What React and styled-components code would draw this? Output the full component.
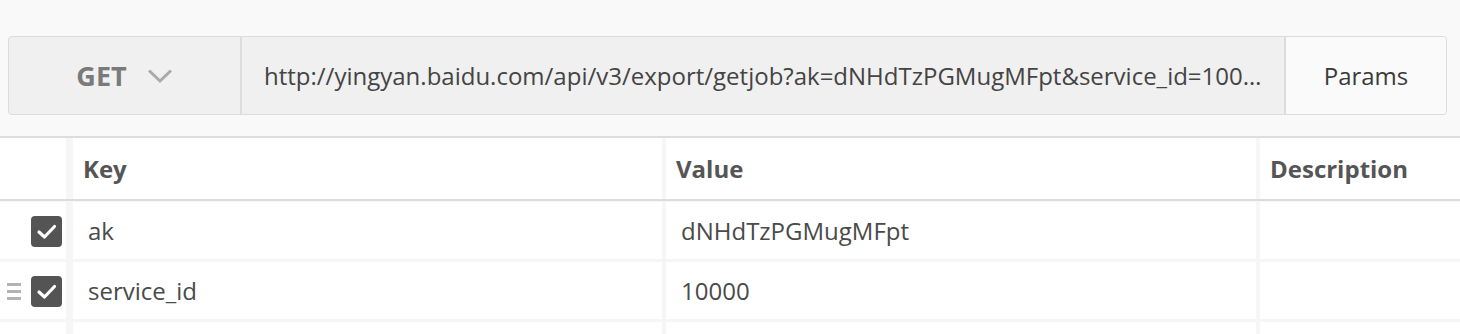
import React from 'react';
import styled, { createGlobalStyle } from 'styled-components';

const GlobalStyle = createGlobalStyle`
  body {
    margin: 0;
    background: #f9f9f9;
    font-family: "Open Sans", "DejaVu Sans", sans-serif;
  }
`;

const url = 'http://yingyan.baidu.com/api/v3/export/getjob?ak=dNHdTzPGMugMFpt&service_id=10000';

const params = [
  { key: 'ak', value: 'dNHdTzPGMugMFpt', description: '' },
  { key: 'service_id', value: '10000', description: '', hover: true },
  { key: '', value: '', description: '' },
];

const Chevron = () => (
  <svg width="26" height="16" viewBox="0 0 26 16">
    <path d="M2 2.5 L13 13 L24 2.5" fill="none" stroke="#aaa" strokeWidth="3" />
  </svg>
);

const Check = () => (
  <svg width="31" height="31" viewBox="0 0 31 31">
    <rect width="31" height="31" rx="4" fill="#545454" />
    <path d="M8 16 L13.5 21 L23.5 10.5" fill="none" stroke="#fff" strokeWidth="3.2" strokeLinecap="round" strokeLinejoin="round" />
  </svg>
);

const App = () => (
  <Page>
    <GlobalStyle />
    <RequestBar>
      <Method>
        GET
        <Chevron />
      </Method>
      <Url>{url}</Url>
      <ParamsButton>Params</ParamsButton>
    </RequestBar>
    <Table>
      <HeadRow>
        <HeadCell />
        <HeadCell>Key</HeadCell>
        <HeadCell>Value</HeadCell>
        <HeadCell>Description</HeadCell>
      </HeadRow>
      {params.map((p, i) => (
        <Row key={i}>
          <CheckCell>
            {p.hover && <Handle><span /><span /><span /></Handle>}
            {p.key && <Check />}
          </CheckCell>
          <Cell>{p.key}</Cell>
          <Cell>{p.value}</Cell>
          <Cell>{p.description}</Cell>
        </Row>
      ))}
    </Table>
  </Page>
);

const Page = styled.div`
  padding-top: 36px;
  height: 298px;
  overflow: hidden;
`;

const RequestBar = styled.div`
  display: flex;
  height: 77px;
  margin: 0 13px 0 8px;
  border: 1px solid #dcdcdc;
  border-radius: 4px;
  background: #f0f0f0;
  overflow: hidden;
  font-size: 24px;
`;

const Method = styled.div`
  width: 231px;
  flex-shrink: 0;
  display: flex;
  align-items: center;
  justify-content: center;
  gap: 20px;
  border-right: 2px solid #dcdcdc;
  color: #7a7a7a;
  font-weight: 700;
  font-size: 27px;
`;

const Url = styled.div`
  flex: 1;
  min-width: 0;
  padding: 0 20px 0 22px;
  line-height: 77px;
  color: #444;
  white-space: nowrap;
  overflow: hidden;
  text-overflow: ellipsis;
`;

const ParamsButton = styled.div`
  width: 160px;
  flex-shrink: 0;
  display: flex;
  align-items: center;
  justify-content: center;
  border-left: 2px solid #dcdcdc;
  background: #fafafa;
  color: #3a3a3a;
`;

const Table = styled.div`
  margin-top: 21px;
  border-top: 2px solid #dddddd;
  background: #f6f6f6;
`;

const grid = `
  display: grid;
  grid-template-columns: 66px 596px 594px 1fr;
`;

const HeadRow = styled.div`
  ${grid}
  height: 61px;
  border-bottom: 2px solid #dcdcdc;
`;

const HeadCell = styled.div`
  display: flex;
  align-items: center;
  padding-left: 10px;
  background: #fff;
  color: #555;
  font-weight: 700;
  font-size: 24px;
  &:nth-child(2) { border-left: 7px solid #f6f6f6; }
  &:nth-child(3), &:nth-child(4) { border-left: 4px solid #f6f6f6; }
`;

const Row = styled.div`
  ${grid}
  height: 57px;
  margin-top: 1px;
  margin-bottom: 3px;
`;

const Cell = styled.div`
  display: flex;
  align-items: center;
  padding-left: 15px;
  background: #fff;
  color: #4a4a4a;
  font-size: 24px;
  white-space: nowrap;
  &:nth-child(2) { border-left: 7px solid #f6f6f6; }
  &:nth-child(3), &:nth-child(4) { border-left: 4px solid #f6f6f6; }
`;

const CheckCell = styled.div`
  display: flex;
  align-items: center;
  justify-content: flex-end;
  gap: 10px;
  padding: 2px 4px 0 0;
  background: #fff;
`;

const Handle = styled.div`
  display: flex;
  flex-direction: column;
  gap: 4px;
  span {
    display: block;
    width: 14px;
    height: 3px;
    background: #b3b3b3;
  }
`;

export default App;
